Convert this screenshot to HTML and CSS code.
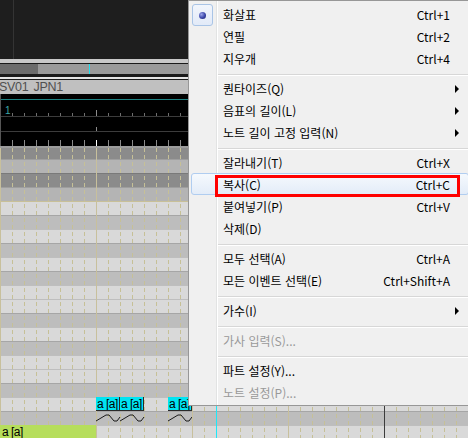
FILE: index.html
```html
<!DOCTYPE html>
<html lang="ko">
<head>
    <meta charset="UTF-8">
    <title>Piano Roll</title>
    <link rel="stylesheet" href="styles.css">
</head>
<body>

    <!-- editor behind the menu -->
    <div class="editor">
        <div class="topbar"></div>
        <div class="band-light"></div>
        <div class="gap1"></div>
        <div class="scrollbar">
            <div class="scroll-thumb"></div>
            <div class="scroll-track"><span class="scroll-cursor"></span></div>
        </div>
        <div class="gap3"></div>
        <div class="band-white"></div>
        <div class="gap1"></div>
        <div class="track-name">SV01 JPN1</div>

        <div class="ruler">
            <svg width="468" height="52" viewBox="0 0 468 52">
                <defs>
                    <pattern id="ticks" width="12" height="52" patternUnits="userSpaceOnUse">
                        <line x1="0.5" y1="19" x2="0.5" y2="22" stroke="#6e6e6e"/>
                        <line x1="0.5" y1="46" x2="0.5" y2="52" stroke="#8a8a8a"/>
                    </pattern>
                </defs>
                <rect width="468" height="52" fill="url(#ticks)"/>
                <line x1="0" y1="5.5" x2="468" y2="5.5" stroke="#1f8282"/>
                <line x1="0" y1="22.5" x2="468" y2="22.5" stroke="#3c3c3c"/>
                <line x1="0" y1="37.5" x2="468" y2="37.5" stroke="#3c3c3c"/>
                <line x1="96.5" y1="16" x2="96.5" y2="22" stroke="#8c8c8c"/>
                <line x1="96.5" y1="33" x2="96.5" y2="37" stroke="#8c8c8c"/>
                <line x1="96.5" y1="46" x2="96.5" y2="52" stroke="#ffffff"/>
                <line x1="0.5" y1="0" x2="0.5" y2="52" stroke="#555"/>
                <text x="5" y="19.5" fill="#3aa8a8" font-size="10" font-family="Liberation Sans">1</text>
            </svg>
        </div>

        <div class="roll">
            <div class="row out-b first"></div>
            <div class="row out-w"></div>
            <div class="row out-b"></div>
            <div class="row out-w"></div>
            <div class="row w octave"></div>
            <div class="row b"></div>
            <div class="row w"></div>
            <div class="row b"></div>
            <div class="row w"></div>
            <div class="row b"></div>
            <div class="row w"></div>
            <div class="row w"></div>
            <div class="row b"></div>
            <div class="row w"></div>
            <div class="row b"></div>
            <div class="row w"></div>
            <div class="row w"></div>
            <div class="row b"></div>
            <div class="row w">
                <span class="note n1">a [a]</span>
                <span class="note n2">a [a]</span>
                <span class="note n3">a [a]</span>
            </div>
            <div class="row b">
                <svg class="curves" width="96" height="14" viewBox="0 0 96 14">
                    <polyline points="0,10 10,4 13,4 18,10 21,10 24,6" />
                    <polyline points="24,10 34,4 37,4 42,10 45,10 48,6" />
                    <polyline points="72,10 82,4 85,4 90,10 93,10 96,6" />
                </svg>
            </div>
            <div class="row w">
                <span class="lyric-bar">a [a]</span>
            </div>

            <span class="playhead"></span>
            <span class="barline"></span>
        </div>
    </div>

    <!-- context menu -->
    <div class="menu">
        <div class="item"><span class="radio"></span><span class="label">화살표</span><span class="key">Ctrl+1</span></div>
        <div class="item"><span class="label">연필</span><span class="key">Ctrl+2</span></div>
        <div class="item"><span class="label">지우개</span><span class="key">Ctrl+4</span></div>
        <div class="sep"></div>
        <div class="item sub"><span class="label">퀀타이즈(Q)</span></div>
        <div class="item sub"><span class="label">음표의 길이(L)</span></div>
        <div class="item sub"><span class="label">노트 길이 고정 입력(N)</span></div>
        <div class="sep"></div>
        <div class="item"><span class="label">잘라내기(T)</span><span class="key">Ctrl+X</span></div>
        <div class="item hot"><span class="label">복사(C)</span><span class="key">Ctrl+C</span><span class="mark"></span></div>
        <div class="item"><span class="label">붙여넣기(P)</span><span class="key">Ctrl+V</span></div>
        <div class="item"><span class="label">삭제(D)</span></div>
        <div class="sep"></div>
        <div class="item"><span class="label">모두 선택(A)</span><span class="key">Ctrl+A</span></div>
        <div class="item"><span class="label">모든 이벤트 선택(E)</span><span class="key">Ctrl+Shift+A</span></div>
        <div class="sep"></div>
        <div class="item sub"><span class="label">가수(I)</span></div>
        <div class="sep"></div>
        <div class="item disabled"><span class="label">가사 입력(S)...</span></div>
        <div class="sep"></div>
        <div class="item"><span class="label">파트 설정(Y)...</span></div>
        <div class="item disabled"><span class="label">노트 설정(P)...</span></div>
    </div>

</body>
</html>
```

FILE: styles.css
```css
* {
    box-sizing: border-box;
}

html, body {
    margin: 0;
}

body {
    width: 468px;
    height: 438px;
    overflow: hidden;
    position: relative;
    background: #1e1e1e;
    font-family: "Noto Sans CJK KR", sans-serif;
}

/* top bands */
.topbar {
    height: 59px;
    background: linear-gradient(to right, transparent 13px, #343434 13px 14px, transparent 14px) #1e1e1e;
}
.band-light {
    height: 4px;
    background: #c8c8c8;
}
.gap1 {
    height: 1px;
    background: #1a1a1a;
}
.gap3 {
    height: 3px;
    background: #1a1a1a;
}
.band-white {
    height: 2px;
    background: #e4e4e4;
}

.scrollbar {
    height: 10px;
    display: flex;
}
.scroll-thumb {
    width: 38px;
    background: #6c6c6c;
}
.scroll-track {
    flex: 1;
    position: relative;
    background: #9a9a9a;
}
.scroll-cursor {
    position: absolute;
    left: 51px;
    top: 0;
    bottom: 0;
    width: 1px;
    background: #1ee0f0;
}

.track-name {
    height: 14px;
    padding-left: 0;
    background: #c0c0c0;
    color: #505050;
    font: 12.5px/15px "Liberation Sans", sans-serif;
    letter-spacing: -0.3px;
    word-spacing: 2px;
    white-space: nowrap;
    text-indent: -1px;
}

.ruler {
    height: 52px;
    background: #000;
}
.ruler svg {
    display: block;
}

/* piano roll */
.roll {
    position: relative;
    border-top: 2px solid #9c9c9c;
}
.roll::before {
    content: "";
    position: absolute;
    inset: 0;
    z-index: 1;
    background: linear-gradient(to right, #c6c096 1px, transparent 1px) 0 0 / 12px 100%;
    -webkit-mask-image: repeating-linear-gradient(to bottom, #000 0 4px, transparent 4px 7px);
    mask-image: repeating-linear-gradient(to bottom, #000 0 4px, transparent 4px 7px);
}
.roll::after {
    content: "";
    position: absolute;
    inset: 0;
    z-index: 1;
    background: linear-gradient(to right, #c8c09c 1px, transparent 1px) 0 0 / 96px 100%;
}

.row {
    position: relative;
    height: 14px;
    border-top: 1px solid rgba(0, 0, 0, 0.12);
}
.row.first {
    height: 11px;
    border-top: none;
}
.row.w {
    background: #d9d9d9;
}
.row.b {
    background: #bdbdbd;
}
.row.out-w {
    background: #b4b4b4;
}
.row.out-b {
    background: #8b8b8b;
}
.row.octave {
    border-top-color: #c8c098;
}

.note {
    position: absolute;
    top: -1px;
    height: 14px;
    width: 24px;
    z-index: 2;
    padding-left: 1px;
    background: #00e4f2;
    border-right: 1px solid #2a2a2a;
    border-bottom: 1px solid #2a2a2a;
    color: #000;
    font: 12px/14px "Liberation Sans", sans-serif;
    letter-spacing: -0.5px;
    white-space: nowrap;
    overflow: hidden;
}
.n1 { left: 96px; }
.n2 { left: 120px; }
.n3 { left: 168px; }

.curves {
    position: absolute;
    left: 96px;
    top: -1px;
    z-index: 2;
}
.curves polyline {
    fill: none;
    stroke: #1a1a1a;
    stroke-width: 1;
}

.lyric-bar {
    position: absolute;
    left: 0;
    top: -1px;
    width: 96px;
    height: 14px;
    z-index: 2;
    padding-left: 2px;
    background: #b6de5c;
    color: #000;
    font: 12px/15px "Liberation Sans", sans-serif;
    letter-spacing: -0.5px;
}

.playhead {
    position: absolute;
    left: 216px;
    top: 0;
    bottom: 0;
    width: 1px;
    z-index: 3;
    background: #1ee8f8;
}
.barline {
    position: absolute;
    left: 384px;
    top: 0;
    bottom: 0;
    width: 1px;
    z-index: 3;
    background: #3c3c3c;
}

/* context menu */
.menu {
    position: absolute;
    left: 188px;
    top: 0;
    width: 284px;
    z-index: 5;
    padding: 3px 0 1px;
    border: 1px solid #979797;
    background: linear-gradient(to right, transparent 27px, #e2e3e3 27px 28px, #fff 28px 29px, transparent 29px) #f0f0f0;
    color: #000;
    font-size: 12px;
}

.item {
    position: relative;
    height: 22px;
    display: flex;
    align-items: center;
    padding: 0 21px 0 34px;
    line-height: 22px;
    white-space: nowrap;
}
.item > span {
    position: relative;
}
.key {
    margin-left: auto;
}
.item.disabled {
    color: #999;
}

.item.sub::after {
    content: "";
    position: absolute;
    left: 266px;
    top: 7px;
    border-left: 4px solid #000;
    border-top: 4px solid transparent;
    border-bottom: 4px solid transparent;
}

.item.hot::before {
    content: "";
    position: absolute;
    left: 2px;
    right: 2px;
    top: -1px;
    bottom: 1px;
    border: 1px solid #b0cdf0;
    border-radius: 3px;
    background: linear-gradient(#f5f9fd, #e3ecf8);
}

.item > .radio {
    position: absolute;
    left: 3px;
    top: 0;
    width: 21px;
    height: 22px;
    border: 1px solid #a9c4e6;
    border-radius: 3px;
    background: linear-gradient(#f1f5fc, #e2eaf8);
}
.radio::after {
    content: "";
    position: absolute;
    left: 6px;
    top: 7px;
    width: 7px;
    height: 7px;
    border-radius: 50%;
    background: radial-gradient(circle at 35% 35%, #9aa4ea, #3a45a8 55%, #1c226a);
}

.item > .mark {
    position: absolute;
    left: 26px;
    top: 1px;
    width: 245px;
    height: 22px;
    border: 3px solid #f00;
}

.sep {
    height: 2px;
    margin: 4px 0 2px 29px;
    border-top: 1px solid #d7d7d7;
    border-bottom: 1px solid #fff;
}
```
